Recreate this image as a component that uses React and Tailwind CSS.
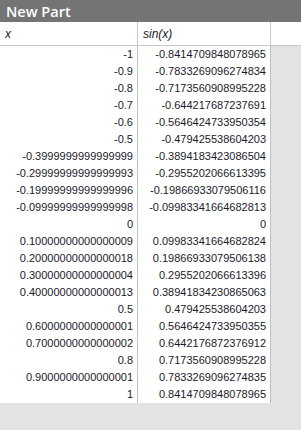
import React from "react";

const xs = ["-1","-0.9","-0.8","-0.7","-0.6","-0.5","-0.3999999999999999","-0.29999999999999993","-0.19999999999999996","-0.09999999999999998","0","0.10000000000000009","0.20000000000000018","0.30000000000000004","0.40000000000000013","0.5","0.6000000000000001","0.7000000000000002","0.8","0.9000000000000001","1"];
const ys = ["-0.8414709848078965","-0.7833269096274834","-0.7173560908995228","-0.644217687237691","-0.5646424733950354","-0.479425538604203","-0.3894183423086504","-0.2955202066613395","-0.19866933079506116","-0.09983341664682813","0","0.09983341664682824","0.19866933079506138","0.2955202066613396","0.38941834230865063","0.479425538604203","0.5646424733950355","0.6442176872376912","0.7173560908995228","0.7833269096274835","0.8414709848078965"];

export default function App() {
  return (
    <div className="w-[301px] h-[430px] bg-[#e3e3e3] flex flex-col overflow-hidden" style={{ fontFamily: '"Liberation Sans", Arial, sans-serif' }}>
      <div className="h-[22px] bg-[#747474] flex items-center pl-[6px] pt-[1px] text-white text-[14.5px] font-semibold" style={{ fontFamily: '"Open Sans", sans-serif' }}>
        New Part
      </div>
      <div className="h-[24px] bg-white border-b border-[#c8c8c8] flex text-[12px] italic text-[#1a1a2a]">
        <div className="w-[138px] border-r border-[#c8c8c8] flex items-center pl-[5px]">x</div>
        <div className="w-[133px] border-r border-[#c8c8c8] flex items-center pl-[5px]">sin(x)</div>
        <div className="flex-1"></div>
      </div>
      <div className="w-[271px] bg-white flex flex-col text-[11px] text-[#1a1a2a]">
        {xs.map((x, i) => (
          <div key={i} className="h-[17px] flex">
            <div className="w-[138px] border-r border-[#c0c0c0] flex items-center justify-end pr-[4px]">{x}</div>
            <div className="w-[133px] border-r border-[#c0c0c0] flex items-center justify-end pr-[4px]">{ys[i]}</div>
          </div>
        ))}
      </div>
    </div>
  );
}
